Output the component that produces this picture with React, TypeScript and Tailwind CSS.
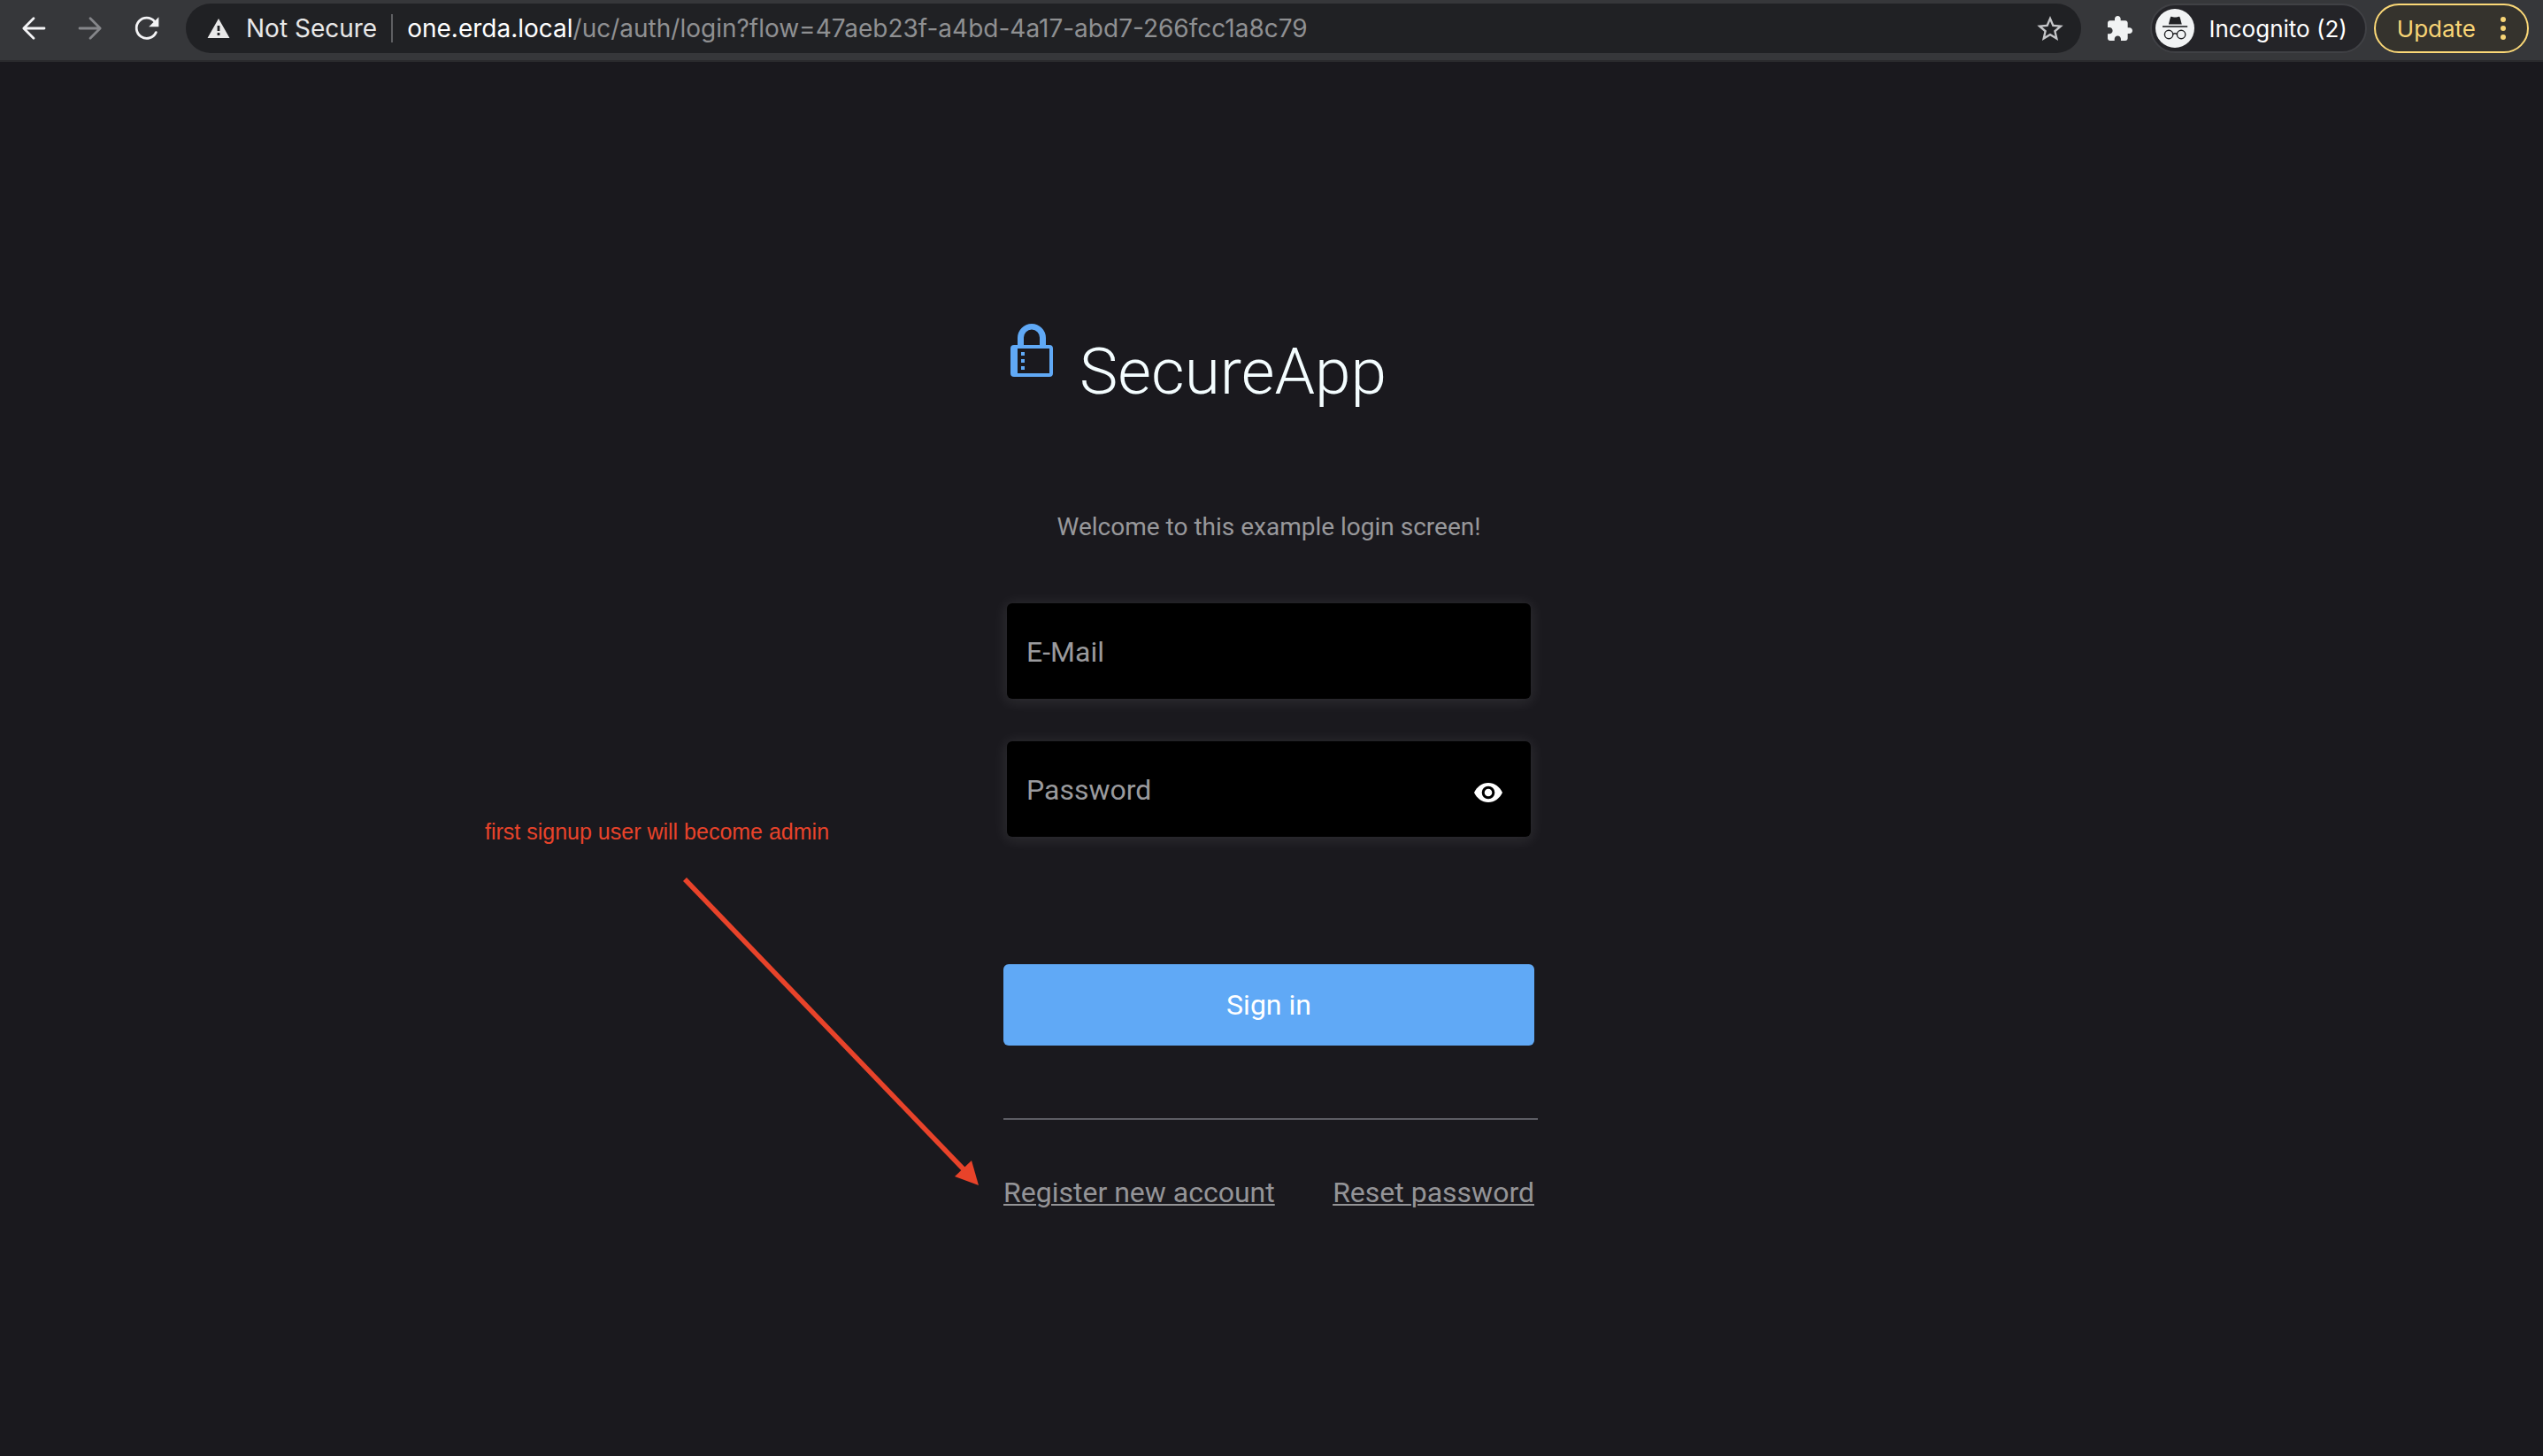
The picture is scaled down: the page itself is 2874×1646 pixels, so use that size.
import React, { useState } from "react";

function BackIcon({ flipped = false }: { flipped?: boolean }) {
  return (
    <svg
      viewBox="0 0 28 28"
      className={flipped ? "size-7 rotate-180" : "size-7"}
      fill="none"
      stroke="currentColor"
      strokeWidth="2.8"
      strokeLinecap="round"
      strokeLinejoin="round"
      aria-hidden="true"
    >
      <path d="M26 14H3M14 2.8L2.8 14L14 25.2" />
    </svg>
  );
}

function ReloadIcon() {
  return (
    <svg viewBox="0 0 28 28" className="size-7" fill="none" aria-hidden="true">
      <path
        d="M24.3 18.6A11.6 11.6 0 1 1 22.6 6.1"
        stroke="currentColor"
        strokeWidth="2.8"
        strokeLinecap="round"
      />
      <path d="M27.4 1.2V12.2H16.2Z" fill="currentColor" />
    </svg>
  );
}

function WarningIcon() {
  return (
    <svg viewBox="0 0 26 24" className="h-6 w-[26px] shrink-0" aria-hidden="true">
      <path
        fillRule="evenodd"
        fill="#e8e8e8"
        d="M13 1L25.5 23H0.5ZM11.6 9V15H14.4V9ZM11.6 17V20H14.4V17Z"
      />
    </svg>
  );
}

function StarIcon() {
  return (
    <svg viewBox="2 2 20 19" className="h-7 w-[30px]" fill="currentColor" aria-hidden="true">
      <path d="M22 9.24l-7.19-.62L12 2 9.19 8.63 2 9.24l5.46 4.73L5.82 21 12 17.27 18.18 21l-1.63-7.03L22 9.24zM12 15.4l-3.76 2.27 1-4.28-3.32-2.88 4.38-.38L12 6.1l1.71 4.04 4.38.38-3.32 2.88 1 4.28L12 15.4z" />
    </svg>
  );
}

function ExtensionIcon() {
  return (
    <svg viewBox="2 1 21 21" className="size-7" fill="currentColor" aria-hidden="true">
      <path d="M20.5 11H19V7c0-1.1-.9-2-2-2h-4V3.5C13 2.12 11.88 1 10.5 1S8 2.12 8 3.5V5H4c-1.1 0-1.99.9-1.99 2v3.8H3.5c1.49 0 2.7 1.21 2.7 2.7s-1.21 2.7-2.7 2.7H2V20c0 1.1.9 2 2 2h3.8v-1.5c0-1.49 1.21-2.7 2.7-2.7 1.49 0 2.7 1.21 2.7 2.7V22H17c1.1 0 2-.9 2-2v-4h1.5c1.38 0 2.5-1.12 2.5-2.5S21.88 11 20.5 11z" />
    </svg>
  );
}

function IncognitoIcon() {
  return (
    <svg viewBox="0 0 44 44" className="size-11 shrink-0" aria-hidden="true">
      <circle cx="22" cy="22" r="22" fill="#f1f3f4" />
      <path
        d="M17.6 8.8C18.4 8.3 20.2 9.6 22.3 9.6S26.2 8.3 27 8.8C27.9 9.3 28.8 14 29.8 17.4H14.9C15.9 14 16.7 9.3 17.6 8.8Z"
        fill="#202124"
      />
      <path d="M8 20H36.2" stroke="#202124" strokeWidth="1.6" />
      <g fill="none" stroke="#202124" strokeWidth="1.4">
        <circle cx="15.1" cy="29" r="4.7" />
        <circle cx="29.1" cy="29" r="4.7" />
        <path d="M19.8 28.6Q22.1 26.9 24.4 28.6" />
      </g>
    </svg>
  );
}

function DotsIcon() {
  return (
    <svg viewBox="0 0 6 28" className="h-7 w-1.5" fill="currentColor" aria-hidden="true">
      <circle cx="3" cy="4" r="3" />
      <circle cx="3" cy="14" r="3" />
      <circle cx="3" cy="24" r="3" />
    </svg>
  );
}

function LockLogo() {
  return (
    <svg viewBox="0 0 48 60" className="h-[60px] w-12 shrink-0" fill="#60a9f6" aria-hidden="true">
      <path d="M8 24V16A16 16 0 0 1 40 16V24H33V15.5A9 9 0 0 0 15 15.5V24Z" />
      <path
        fillRule="evenodd"
        d="M4 24H44A4 4 0 0 1 48 28V56A4 4 0 0 1 44 60H4A4 4 0 0 1 0 56V28A4 4 0 0 1 4 24ZM8 28V56H44V28Z"
      />
      <path d="M12 32H16V36H12ZM12 40H16V44H12ZM12 48H16V52H12Z" />
    </svg>
  );
}

function EyeIcon() {
  return (
    <svg viewBox="0 0 32 24" className="h-6 w-8" aria-hidden="true">
      <path
        d="M16 1C9 1 3 5.5 0 12C3 18.5 9 23 16 23S29 18.5 32 12C29 5.5 23 1 16 1Z"
        fill="#fff"
      />
      <circle cx="16" cy="12" r="5.8" fill="none" stroke="#000" strokeWidth="3" />
    </svg>
  );
}

function BrowserBar() {
  return (
    <header className="flex h-[70px] items-start border-b-2 border-[#2a2a2d] bg-[#36373a] pt-1 pr-4 pl-6 font-['Inter',sans-serif] text-[28px] text-white">
      <nav className="flex h-14 items-center gap-9 pr-[30px] text-[#f4f4f6]">
        <button type="button" aria-label="Back">
          <BackIcon />
        </button>
        <button type="button" aria-label="Forward" className="text-[#85868a]">
          <BackIcon flipped />
        </button>
        <button type="button" aria-label="Reload">
          <ReloadIcon />
        </button>
      </nav>
      <div className="flex h-14 min-w-0 flex-1 items-center rounded-full bg-[#202124] pr-5 pl-6">
        <WarningIcon />
        <span className="ml-[18px] whitespace-nowrap text-[#e8e8e8]">Not Secure</span>
        <span className="mx-4 h-8 w-0.5 shrink-0 bg-[#5f6063]" />
        <span className="min-w-0 flex-1 truncate text-[#8f9092]">
          <span className="text-white">one.erda.local</span>
          /uc/auth/login?flow=47aeb23f-a4bd-4a17-abd7-266fcc1a8c79
        </span>
        <button type="button" aria-label="Bookmark this page" className="text-[#c4c5c8]">
          <StarIcon />
        </button>
      </div>
      <button
        type="button"
        aria-label="Extensions"
        className="mr-5 ml-[30px] flex h-14 items-center text-[#f1f3f4]"
      >
        <ExtensionIcon />
      </button>
      <button
        type="button"
        className="mr-2 flex h-14 items-center gap-4 rounded-full border-2 border-[#404145] bg-[#242428] pr-5 pl-1 text-[26px] whitespace-nowrap"
      >
        <IncognitoIcon />
        Incognito (2)
      </button>
      <button
        type="button"
        className="flex h-14 items-center gap-7 rounded-full border-2 border-[#fbd877] bg-[#35332d] pr-6 pl-6 text-[26px] text-[#f8d576]"
      >
        Update
        <DotsIcon />
      </button>
    </header>
  );
}

const fieldClass =
  "block h-[108px] w-full rounded-md bg-black px-[22px] pt-0.5 text-[32px] text-white shadow-[0_2px_16px_2px_rgba(255,255,255,0.09)] outline-none placeholder:text-[#9a9a9d] placeholder:opacity-100";

function SignupNote() {
  return (
    <aside className="absolute top-[852px] -left-[586px] w-[572px] text-[#e8432a]">
      <p className="font-['Liberation_Sans',Arial,sans-serif] text-[25px] leading-9 whitespace-nowrap">
        first signup user will become admin
      </p>
      <svg viewBox="0 0 340 360" className="mt-7 ml-[222px] h-[360px] w-[340px]" aria-hidden="true">
        <path d="M4 8L322 339" stroke="currentColor" strokeWidth="5.5" fill="none" />
        <path d="M336 354L328 326L309 344Z" fill="currentColor" />
      </svg>
    </aside>
  );
}

export default function App() {
  const [visible, setVisible] = useState(false);

  return (
    <div className="flex min-h-screen flex-col bg-[#1a191e]">
      <BrowserBar />
      <main className="flex flex-1 justify-center pr-1.5 font-['Roboto',sans-serif]">
        <section className="relative w-[600px] pt-[296px] pb-20">
          <div className="flex items-start gap-[30px] pl-2">
            <LockLogo />
            <h1 className="mt-3 text-[73px] leading-[84px] font-light text-[#f4fdff]">SecureApp</h1>
          </div>
          <p className="mt-[118px] text-center text-[28px] leading-8 text-[#98989b]">
            Welcome to this example login screen!
          </p>
          <form onSubmit={(e) => e.preventDefault()}>
            <div className="mt-[70px] flex flex-col gap-12 px-1">
              <input type="email" aria-label="E-Mail" placeholder="E-Mail" className={fieldClass} />
              <div className="relative">
                <input
                  type={visible ? "text" : "password"}
                  aria-label="Password"
                  placeholder="Password"
                  className={fieldClass}
                />
                <button
                  type="button"
                  aria-label="Show password"
                  onClick={() => setVisible(!visible)}
                  className="absolute inset-y-0 right-8 flex items-center pt-2"
                >
                  <EyeIcon />
                </button>
              </div>
            </div>
            <button
              type="submit"
              className="mt-36 h-[92px] w-full rounded-md bg-[#60a9f6] text-[32px] text-white"
            >
              Sign in
            </button>
          </form>
          <hr className="-mr-1 mt-[82px] border-t-2 border-[#5d5d64]" />
          <div className="mt-[62px] flex justify-between text-[32px] leading-10 text-[#949497]">
            <a href="#register" className="underline decoration-2 underline-offset-2">
              Register new account
            </a>
            <a href="#reset" className="underline decoration-2 underline-offset-2">
              Reset password
            </a>
          </div>
          <SignupNote />
        </section>
      </main>
    </div>
  );
}
